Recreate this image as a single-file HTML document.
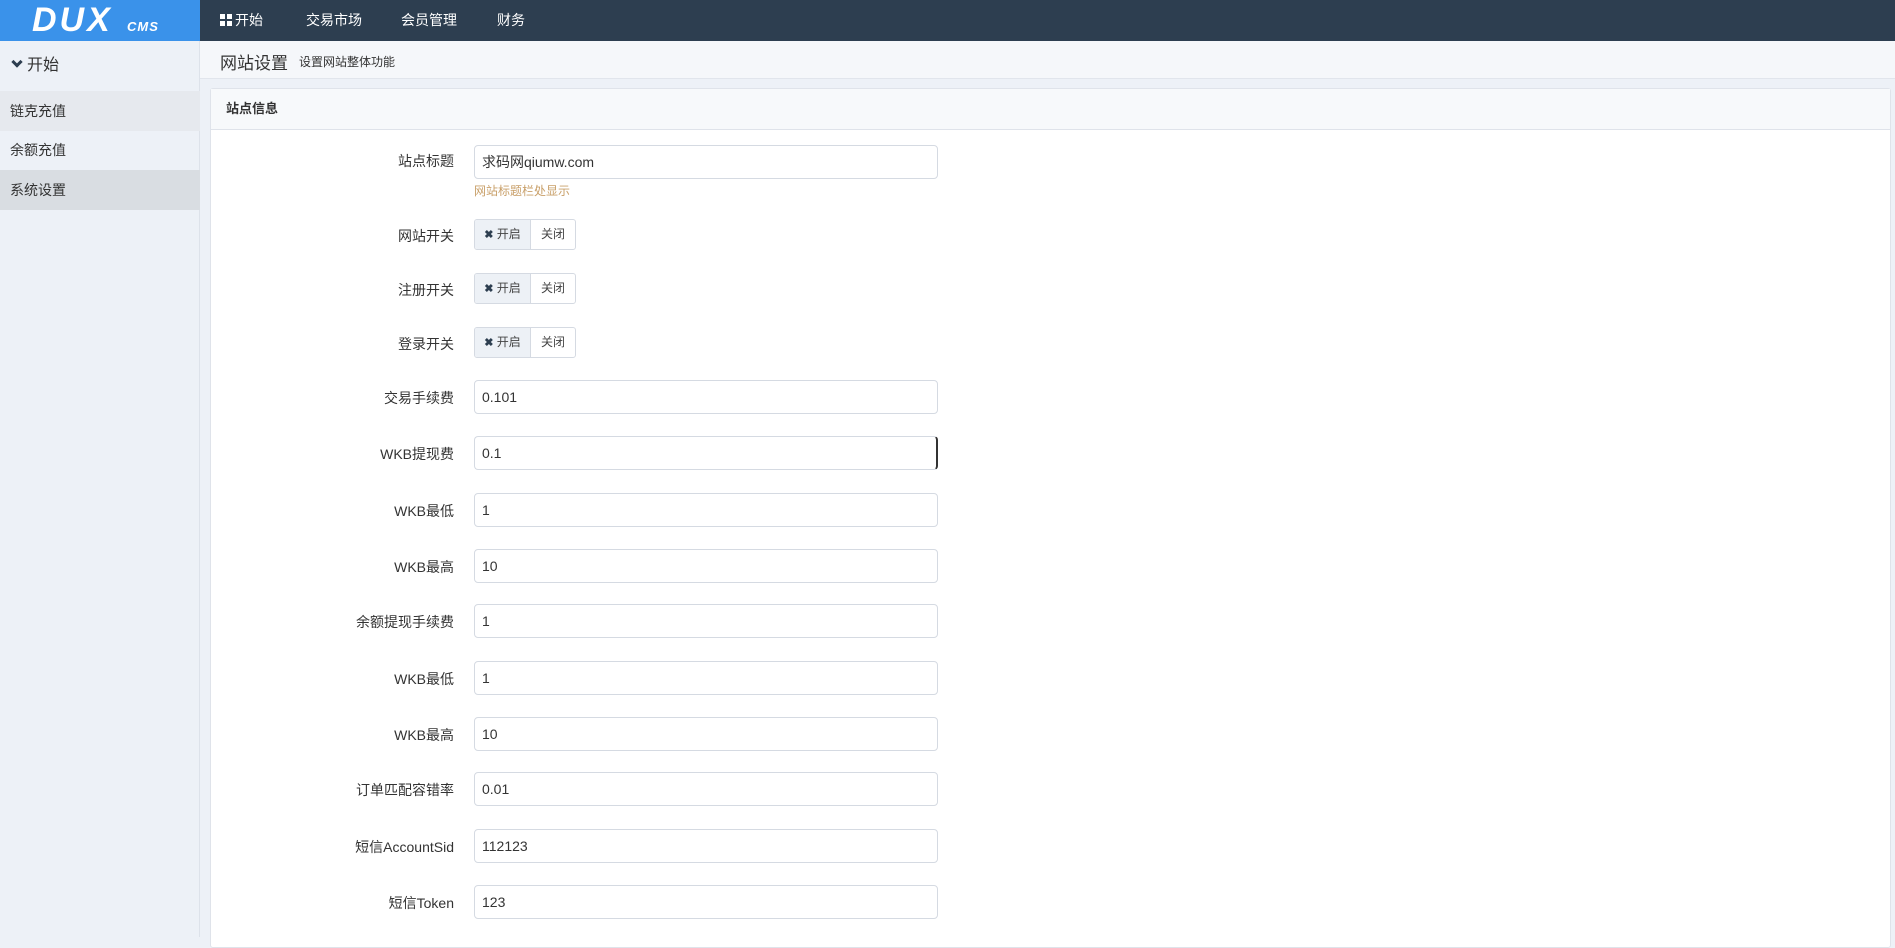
<!DOCTYPE html>
<html><head><meta charset="utf-8"><style>
*{box-sizing:border-box;margin:0;padding:0}
body{width:1895px;height:937px;overflow:hidden;background:#edf1f7;font-family:"Liberation Sans","Noto Sans CJK SC",sans-serif;color:#333;position:relative}
.abs{position:absolute}
#top{left:0;top:0;width:1895px;height:41px;background:#2d3e50}
#logo{left:0;top:0;width:200px;height:41px;background:#3a92ea;color:#fff;font-style:italic;font-weight:bold;overflow:hidden}
.nav{top:0;height:41px;line-height:41px;color:#fff;font-size:14px}
#side{left:0;top:41px;width:200px;height:896px;background:#edf1f7;border-right:1px solid #dde2ea}
.si{left:0;width:200px;height:40px;line-height:40px;padding-left:10px;font-size:14px;color:#333}
#hdr{left:200px;top:41px;width:1695px;height:38px;background:#f5f7fa;border-bottom:1px solid #e1e5ec}
#panel{left:210px;top:88px;width:1681px;height:860px;background:#fff;border:1px solid #dfe3ea;border-radius:3px}
#ph{left:0;top:0;width:100%;height:41px;background:#f7f9fb;border-bottom:1px solid #dfe3ea;font-size:13px;font-weight:bold;line-height:40px;padding-left:15px}
.lb{width:200px;left:254px;text-align:right;font-size:14px;color:#333}
.in{left:474px;width:464px;height:34px;border:1px solid #d5dae2;border-radius:4px;font-size:14px;line-height:32px;padding-left:7px;color:#333;background:#fff}
.tg{left:474px;width:102px;height:31px;border:1px solid #d5dae2;border-radius:3px;font-size:12px;line-height:29px;overflow:hidden;background:#fff;color:#444}
.tg .a{position:absolute;left:0;top:0;width:56px;height:29px;background:#edf1f6;border-right:1px solid #d5dae2;text-align:center}
.tg .b{position:absolute;left:56px;top:0;width:44px;height:29px;text-align:center}
.tg b{color:#2d3e50;font-size:11px}
</style></head><body>
<div id="top" class="abs"></div>
<div id="logo" class="abs"><span class="abs" style="left:32px;top:3px;font-size:34px;letter-spacing:3px;line-height:34px;font-weight:900">DUX</span><span class="abs" style="left:127px;top:20px;font-size:13px;letter-spacing:1px;line-height:14px;font-weight:900">CMS</span></div>
<div class="nav abs" style="left:220px"><span style="display:inline-block;width:12px;height:12px;vertical-align:-1px;background:linear-gradient(#2d3e50,#2d3e50) 5px 0/2px 12px no-repeat,linear-gradient(#2d3e50,#2d3e50) 0 5px/12px 2px no-repeat,#fff;margin-right:3px"></span>开始</div>
<div class="nav abs" style="left:306px">交易市场</div>
<div class="nav abs" style="left:401px">会员管理</div>
<div class="nav abs" style="left:497px">财务</div>
<div id="side" class="abs">
<div class="si abs" style="top:5px;height:40px;font-size:16px;line-height:40px"><span style="display:inline-block;width:8px;height:8px;border-right:3px solid #2d3e50;border-bottom:3px solid #2d3e50;transform:rotate(45deg);margin:0 6px 0 3px;vertical-align:4px"></span>开始</div>
<div class="si abs" style="top:50px;background:#e6e9ee">链克充值</div>
<div class="si abs" style="top:89px">余额充值</div>
<div class="si abs" style="top:129px;background:#d9dde2">系统设置</div>
</div>
<div id="hdr" class="abs"><span class="abs" style="left:20px;top:8px;font-size:17px;color:#333">网站设置</span><span class="abs" style="left:99px;top:12px;font-size:12px;color:#333">设置网站整体功能</span></div>
<div id="panel" class="abs"><div id="ph" class="abs">站点信息</div></div>

<div class="lb abs" style="top:151px">站点标题</div>
<div class="in abs" style="top:145px">求码网qiumw.com</div>
<div class="abs" style="left:474px;top:182px;font-size:12px;color:#c9a06a">网站标题栏处显示</div>

<div class="lb abs" style="top:226px">网站开关</div>
<div class="tg abs" style="top:219px"><div class="a"><b>✖</b> 开启</div><div class="b">关闭</div></div>
<div class="lb abs" style="top:280px">注册开关</div>
<div class="tg abs" style="top:273px"><div class="a"><b>✖</b> 开启</div><div class="b">关闭</div></div>
<div class="lb abs" style="top:334px">登录开关</div>
<div class="tg abs" style="top:327px"><div class="a"><b>✖</b> 开启</div><div class="b">关闭</div></div>

<div class="lb abs" style="top:388px">交易手续费</div><div class="in abs" style="top:380px">0.101</div>
<div class="lb abs" style="top:444px">WKB提现费</div><div class="in abs" style="top:436px;border-right:2px solid #333">0.1</div>
<div class="lb abs" style="top:501px">WKB最低</div><div class="in abs" style="top:493px">1</div>
<div class="lb abs" style="top:557px">WKB最高</div><div class="in abs" style="top:549px">10</div>
<div class="lb abs" style="top:612px">余额提现手续费</div><div class="in abs" style="top:604px">1</div>
<div class="lb abs" style="top:669px">WKB最低</div><div class="in abs" style="top:661px">1</div>
<div class="lb abs" style="top:725px">WKB最高</div><div class="in abs" style="top:717px">10</div>
<div class="lb abs" style="top:780px">订单匹配容错率</div><div class="in abs" style="top:772px">0.01</div>
<div class="lb abs" style="top:837px">短信AccountSid</div><div class="in abs" style="top:829px">112123</div>
<div class="lb abs" style="top:893px">短信Token</div><div class="in abs" style="top:885px">123</div>
</body></html>
